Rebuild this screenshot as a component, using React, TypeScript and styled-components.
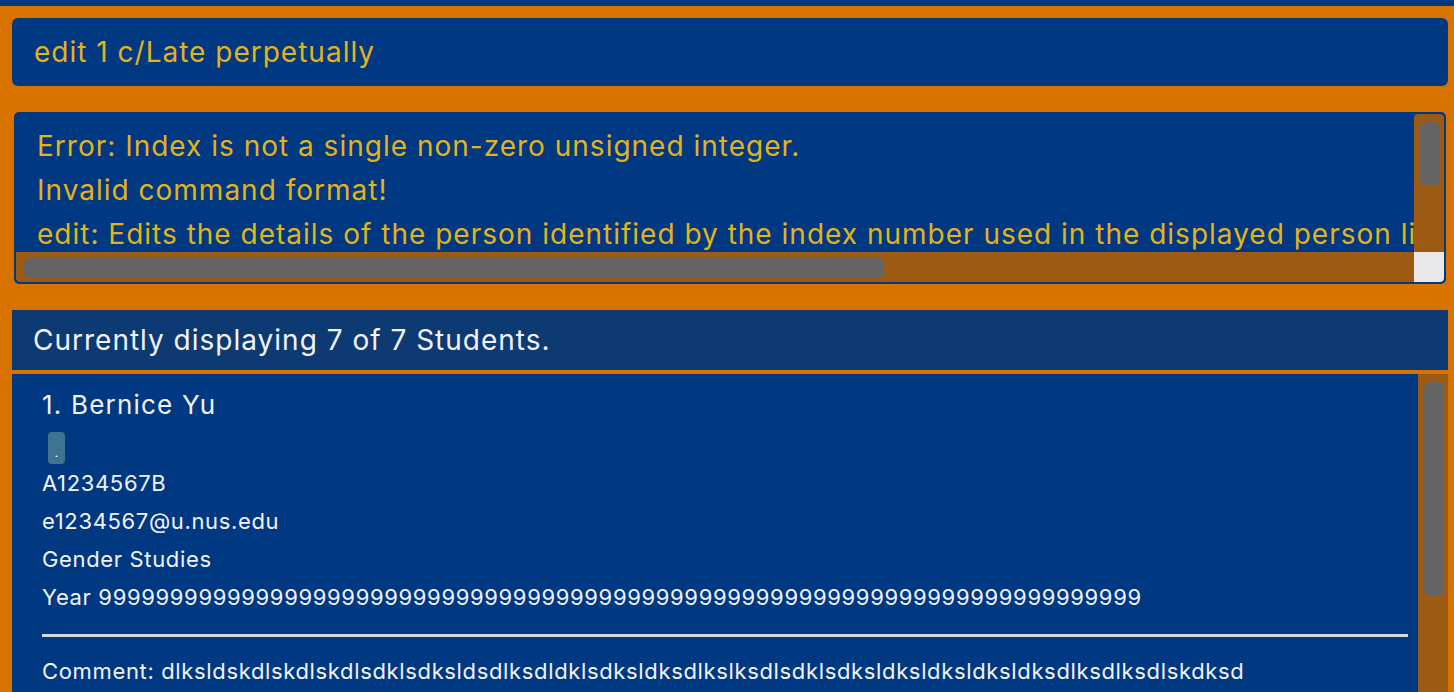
import React from "react";
import styled, { createGlobalStyle } from "styled-components";

const Global = createGlobalStyle`
  html, body { margin: 0; padding: 0; }
  body {
    width: 1454px; height: 692px; overflow: hidden;
    background: #d97300;
    font-family: Inter, "Noto Sans", sans-serif;
  }
`;

const Page = styled.div`
  width: 1454px; height: 692px; display: flex; flex-direction: column;
  background: #d97300; border-top: 6px solid #003882; box-sizing: border-box;
`;

const CommandBox = styled.div`
  margin: 12px 6px 0 12px; height: 68px; border-radius: 6px;
  background: #003882; display: flex; align-items: center; padding-left: 22px;
  color: #e3b31b; font-size: 28px; letter-spacing: 1px;
`;

const ResultBox = styled.div`
  margin: 26px 8px 0 14px; height: 172px; box-sizing: border-box;
  border: 2px solid #003882; border-radius: 5px; background: #003882;
  display: grid; grid-template-columns: 1fr 30px; grid-template-rows: 1fr 30px;
  overflow: hidden;
`;

const ResultText = styled.div`
  padding: 10px 0 0 21px; color: #e3b31b; font-size: 28px; line-height: 44px;
  white-space: nowrap; overflow: hidden; letter-spacing: 1px;
`;

const VTrack = styled.div`
  background: #9c5a12; border-radius: 4px 4px 0 0; padding: 8px 4px 0 6px;
  display: flex; flex-direction: column;
`;

const HTrack = styled.div`
  background: #9c5a12; border-radius: 0 0 0 4px; padding: 6px 0 4px 8px;
  display: flex;
`;

const Thumb = styled.div<{ $w?: number; $h?: number }>`
  background: #646464; border-radius: 6px;
  width: ${(p) => (p.$w ? `${p.$w}px` : "100%")};
  height: ${(p) => (p.$h ? `${p.$h}px` : "100%")};
`;

const Corner = styled.div`
  background: #e8e8e8; border-radius: 0 0 4px 0;
`;

const StatusBar = styled.div`
  margin: 26px 6px 0 12px; height: 60px; background: #0e3a74;
  display: flex; align-items: center; padding-left: 21px;
  color: #f2f2f2; font-size: 28px; letter-spacing: 1px;
`;

const ListArea = styled.div`
  margin: 4px 6px 0 12px; flex: 1; display: grid; grid-template-columns: 1fr 30px;
  min-height: 0;
`;

const List = styled.div`
  background: #003882; overflow: hidden; padding: 16px 10px 0 30px;
  color: #f2f2f2;
`;

const ListTrack = styled.div`
  background: #9c5a12; padding: 8px 4px 0 6px;
`;

const Name = styled.div`
  font-size: 26px; line-height: 30px; letter-spacing: 1.2px;
`;

const Tags = styled.div`
  display: flex; margin-top: 12px; margin-left: 6px;
`;

const Tag = styled.span`
  width: 17px; height: 32px; background: #3f7490; border-radius: 4px;
  color: #fff; font-size: 12px; display: flex; align-items: center; justify-content: center;
  padding-top: 8px; box-sizing: border-box;
`;

const Field = styled.div`
  font-size: 22px; line-height: 38px; letter-spacing: 0.65px; white-space: nowrap;
`;

const Fields = styled.div`
  margin-top: 0;
`;

const Divider = styled.div`
  height: 3px; background: #d2d6de; margin: 18px 0 0 0; width: 1366px;
`;

const Comment = styled(Field)`
  margin-top: 15px;
`;

const NINES = "9".repeat(73);

export default function App() {
  return (
    <>
      <Global />
      <Page>
        <CommandBox>edit 1 c/Late perpetually</CommandBox>
        <ResultBox>
          <ResultText>
            Error: Index is not a single non-zero unsigned integer.
            <br />
            Invalid command format!
            <br />
            edit: Edits the details of the person identified by the index number used in the displayed person list.
          </ResultText>
          <VTrack>
            <Thumb $h={64} />
          </VTrack>
          <HTrack>
            <Thumb $w={860} $h={20} />
          </HTrack>
          <Corner />
        </ResultBox>
        <StatusBar>Currently displaying 7 of 7 Students.</StatusBar>
        <ListArea>
          <List>
            <Name>1. Bernice Yu</Name>
            <Tags>
              <Tag>.</Tag>
            </Tags>
            <Fields>
              <Field>A1234567B</Field>
              <Field>e1234567@u.nus.edu</Field>
              <Field>Gender Studies</Field>
              <Field>Year {NINES}</Field>
            </Fields>
            <Divider />
            <Comment>
              Comment: dlksldskdlskdlskdlsdklsdksldsdlksdldklsdksldksdlkslksdlsdklsdksldksldksldksldksdlksdlksdlskdksd
            </Comment>
          </List>
          <ListTrack>
            <Thumb $h={214} />
          </ListTrack>
        </ListArea>
      </Page>
    </>
  );
}
